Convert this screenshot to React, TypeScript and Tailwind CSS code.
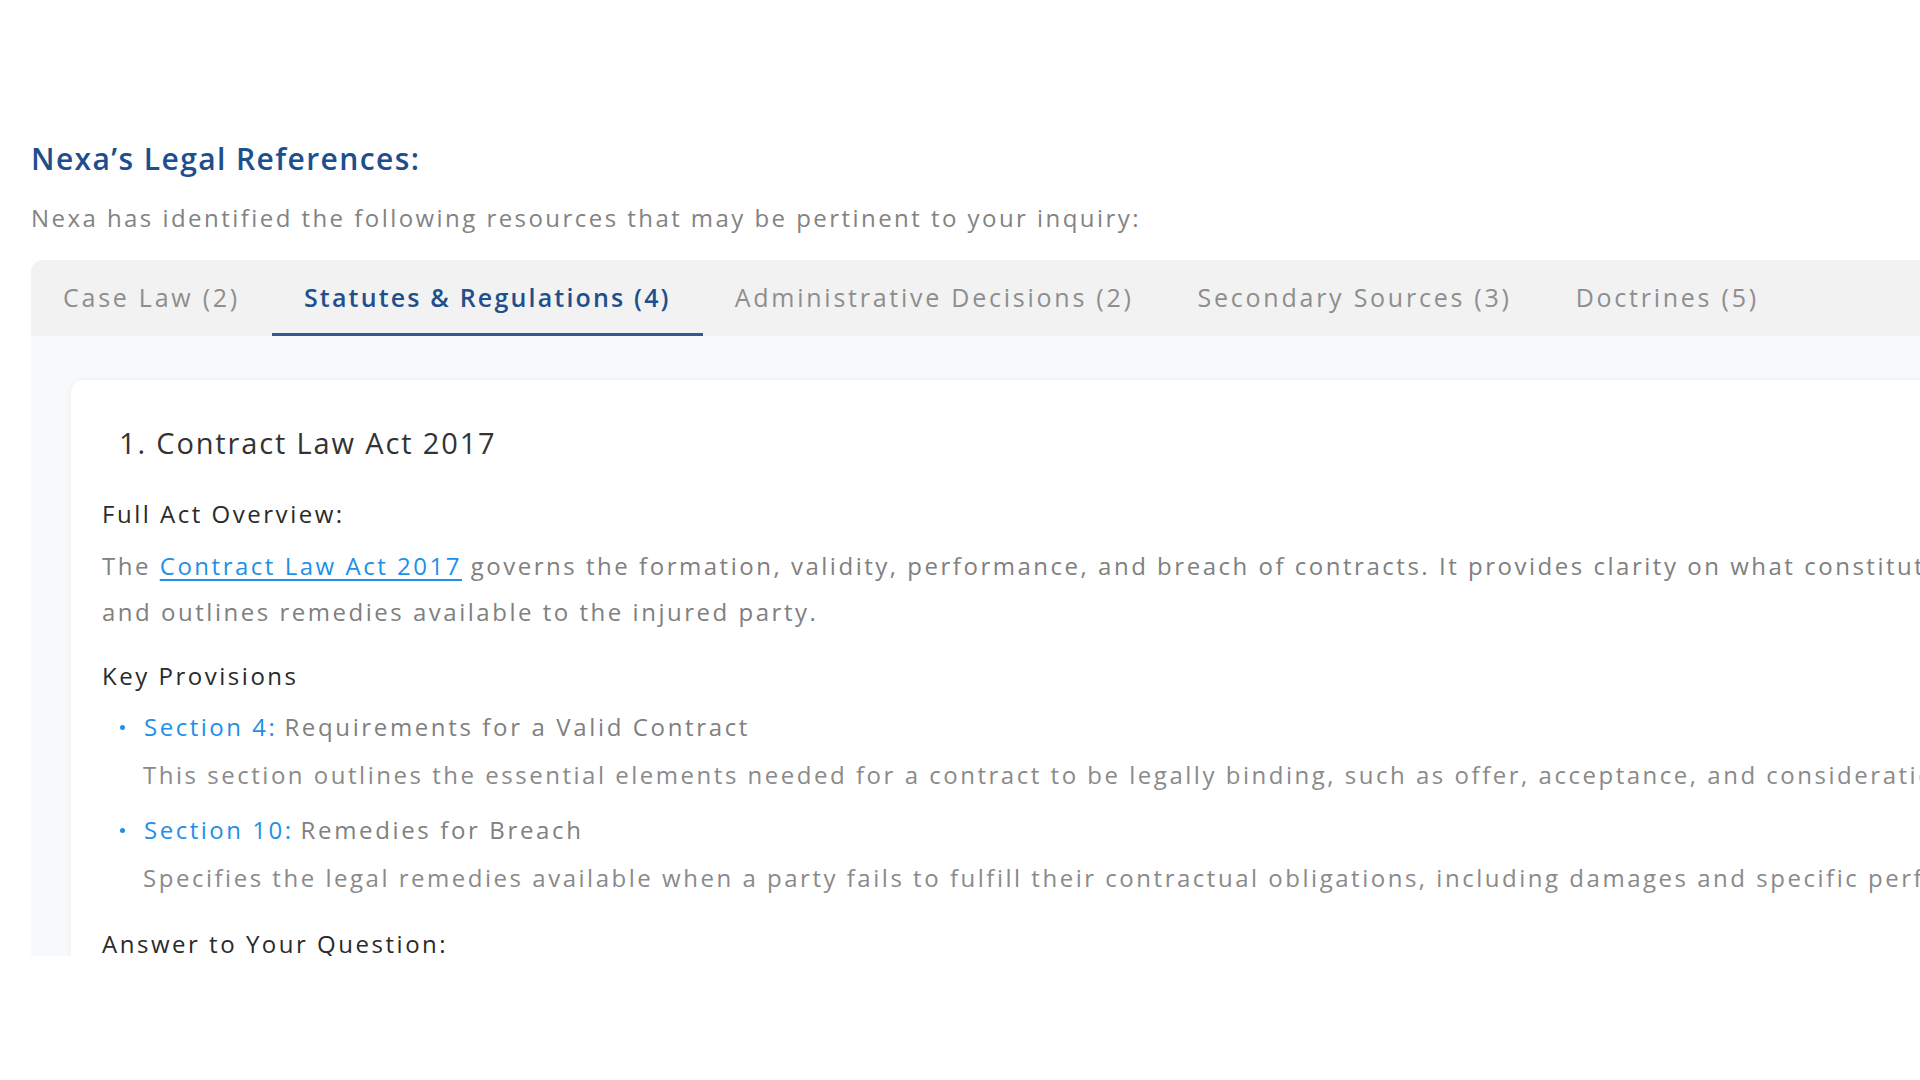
const font = { fontFamily: '"Open Sans", "Noto Sans", Arial, sans-serif' }

const tabs = [
  { label: 'Case Law (2)', active: false },
  { label: 'Statutes & Regulations (4)', active: true },
  { label: 'Administrative Decisions (2)', active: false },
  { label: 'Secondary Sources (3)', active: false },
  { label: 'Doctrines (5)', active: false },
]

const provisions = [
  {
    section: 'Section 4:',
    title: 'Requirements for a Valid Contract',
    body: 'This section outlines the essential elements needed for a contract to be legally binding, such as offer, acceptance, and consideration.',
  },
  {
    section: 'Section 10:',
    title: 'Remedies for Breach',
    body: 'Specifies the legal remedies available when a party fails to fulfill their contractual obligations, including damages and specific performance.',
  },
]

export default function App() {
  return (
    <div className="h-[1080px] w-[1920px] overflow-hidden bg-white" style={font}>
      <div className="pl-[31px] pt-[140px]">
        <h1 className="whitespace-nowrap text-[30px] font-semibold leading-[38px] tracking-[0.047em] text-[#1d4f8e]">
          Nexa’s Legal References:
        </h1>
        <p className="mt-[24px] whitespace-nowrap text-[24px] leading-[32px] tracking-[0.102em] text-[#838383]">
          Nexa has identified the following resources that may be pertinent to your inquiry:
        </p>
        <section className="mt-[26px] h-[696px] w-[2400px] overflow-hidden rounded-tl-xl bg-[#f8f9fb]">
          <TabBar />
          <div className="pl-[40px] pt-[44px]">
            <ActCard />
          </div>
        </section>
      </div>
    </div>
  )
}

function TabBar() {
  return (
    <div className="flex h-[76px] items-stretch rounded-tl-xl bg-[#f2f2f2]">
      {tabs.map((tab) => (
        <button
          key={tab.label}
          type="button"
          className={
            tab.active
              ? 'flex items-center whitespace-nowrap border-b-[3px] border-[#2d5d99] px-[32px] pt-[3px] text-[25px] font-semibold tracking-[0.087em] text-[#1f4f8c]'
              : 'flex items-center whitespace-nowrap border-b-[3px] border-transparent px-[32px] pt-[3px] text-[25px] tracking-[0.11em] text-[#8e8e8e]'
          }
        >
          {tab.label}
        </button>
      ))}
    </div>
  )
}

function ActCard() {
  return (
    <article className="rounded-tl-xl bg-white pb-10 pl-[31px] pt-[43px] text-[24px] tracking-[0.105em] shadow-[0_0_6px_rgba(0,0,0,0.05)]">
      <h2 className="pl-[17px] text-[29px] font-medium leading-[40px] tracking-[0.064em] text-[#333333]">
        1. Contract Law Act 2017
      </h2>
      <h3 className="mt-[35px] font-medium leading-[32px] text-[#2a2a2a]">
        Full Act Overview:
      </h3>
      <p className="mt-[13px] whitespace-nowrap leading-[46px] text-[#808080]">
        The{' '}
        <a href="#" className="text-[#1e90e8] underline underline-offset-4">
          Contract Law Act 2017
        </a>{' '}
        governs the formation, validity, performance, and breach of contracts. It provides clarity on what constitutes a legally binding agreement
        <br />
        and outlines remedies available to the injured party.
      </p>
      <h3 className="mt-[25px] font-medium leading-[32px] text-[#2a2a2a]">
        Key Provisions
      </h3>
      <ul className="mt-[15px] space-y-[15px]">
        {provisions.map((item) => (
          <li key={item.section}>
            <div className="flex items-center whitespace-nowrap leading-[40px]">
              <span className="ml-[18px] mr-[19px] h-[5px] w-[5px] shrink-0 rounded-full bg-[#1e90e8]" />
              <span className="font-medium text-[#1e90e8]">{item.section}</span>
              <span className="ml-[7px] tracking-[0.11em] text-[#808080]">{item.title}</span>
            </div>
            <p className="mt-[8px] whitespace-nowrap pl-[41px] leading-[40px] text-[#8a8a8a]">
              {item.body}
            </p>
          </li>
        ))}
      </ul>
      <h3 className="mt-[30px] font-medium leading-[32px] text-[#2a2a2a]">
        Answer to Your Question:
      </h3>
    </article>
  )
}
